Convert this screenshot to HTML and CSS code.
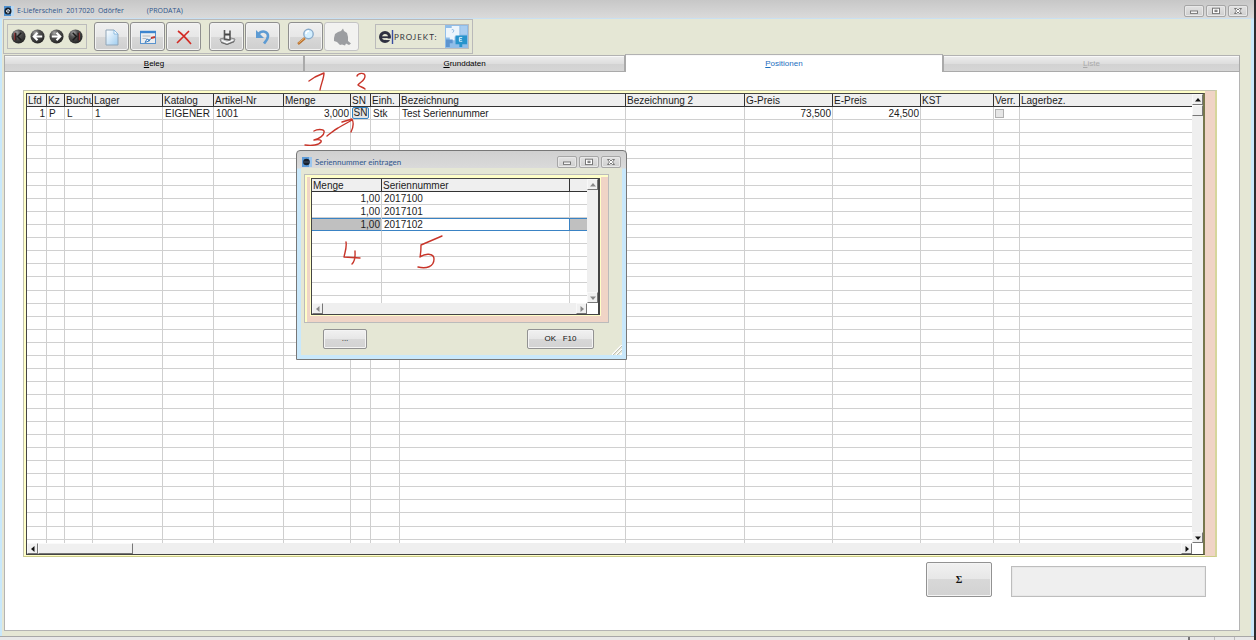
FILE: index.html
```html
<!DOCTYPE html>
<html lang="de">
<head>
<meta charset="utf-8">
<title>E-Lieferschein</title>
<link rel="stylesheet" href="styles.css">
</head>
<body>
<div class="window">
  <header class="titlebar">
    <svg class="appicon" viewBox="0 0 10 10"><rect width="10" height="10" fill="#4d8fcf"/><rect x="7" width="3" height="10" fill="#b9d8f2"/><circle cx="4" cy="5" r="3.5" fill="#18202c"/><path d="M2.5 5h3.2a1.6 1.6 0 1 0-.5 1.4" fill="none" stroke="#dfe8f2" stroke-width=".9"/></svg>
    <span class="caption">E-Lieferschein&nbsp; 2017020&nbsp; Odörfer</span><span class="tenant">(PRODATA)</span>
    <span class="winbtns">
      <button aria-label="Minimieren"><svg viewBox="0 0 10 8"><rect x="1.5" y="4" width="7" height="2.4"/></svg></button>
      <button aria-label="Maximieren"><svg viewBox="0 0 10 8"><rect x="1.5" y="1.2" width="7" height="5.4"/><rect x="4" y="3.2" width="2" height="1.4"/></svg></button>
      <button aria-label="Schließen"><svg viewBox="0 0 10 8"><path d="M1.5 1.5h2L5 3l1.500-1.500h2L6.500 4l2 2.500h-2L5 5 3.500 6.500h-2L3.500 4z"/></svg></button>
    </span>
  </header>
  <div class="client">
    <div class="toolbar">
      <div class="navgroup">
        <button aria-label="Erster"><svg viewBox="0 0 16 16"><use href="#ball"/><path d="M5 4v8M11 4 7 8l4 4" stroke="#1c1c1c" stroke-width="1.600" fill="none"/><path d="M4 4v8" stroke="#a03030"/></svg></button>
        <button aria-label="Zurück"><svg viewBox="0 0 16 16"><use href="#ball"/><path d="M8 4 4 8l4 4M4.500 8H13" stroke="#fff" stroke-width="2.200" fill="none"/></svg></button>
        <button aria-label="Weiter"><svg viewBox="0 0 16 16"><use href="#ball"/><path d="M8 4l4 4-4 4M11.500 8H3" stroke="#fff" stroke-width="2.200" fill="none"/></svg></button>
        <button aria-label="Letzter"><svg viewBox="0 0 16 16"><use href="#ball"/><path d="M5 4l4 4-4 4M11 4v8" stroke="#1c1c1c" stroke-width="1.600" fill="none"/><path d="M12 4v8" stroke="#a03030"/></svg></button>
      </div>
      <div class="tools">
        <button aria-label="Neu"><svg viewBox="0 0 18 18"><path d="M3 2h8l4 4v11H3z" fill="url(#paper)" stroke="#8fa5b8"/><path d="M11 2v4h4z" fill="#fff" stroke="#7fb3dc" stroke-width=".8"/></svg></button>
        <button aria-label="Bearbeiten"><svg viewBox="0 0 18 18"><rect x="1.500" y="3.500" width="15" height="12" fill="#eceef0" stroke="#5a93cd"/><path d="M1 4h16" stroke="#3d85cf" stroke-width="2.400"/><path d="M3.500 8h8M3.500 10.500h4" stroke="#b4bbc2"/><path d="M6 14.500l2-3.500 3 1.500zM9 13l4-3" fill="#fff" stroke="#3f7fc0"/><path d="M12 10l4-1" stroke="#c23b34" stroke-width="2"/></svg></button>
        <button aria-label="Löschen"><svg viewBox="0 0 18 18"><path d="M3 3c4 3 8 7 13 13M14 3C10 7 6 11 2 15" fill="none" stroke="#d32a24" stroke-width="1.600"/></svg></button>
      </div>
      <div class="tools">
        <button aria-label="Speichern"><svg viewBox="0 0 18 18"><path d="M2 11l4-1h7l4 1-1 3-7 2.500L3 14z" fill="#c4c6c8" stroke="#8a8a8a"/><path d="M6.500 2v9l5.500 1V2.500" fill="#eee" stroke="#555" stroke-width="1.600"/><path d="M7 6.500h5" stroke="#444" stroke-width="2"/><path d="M4 12.500l5 2 6-2.500" stroke="#fff" fill="none" stroke-width="1.200"/><path d="M3 14.500l6 2 7-3" stroke="#666" fill="none"/></svg></button>
        <button aria-label="Rückgängig"><svg viewBox="0 0 18 18"><path d="M4 6.500c4-5 10-3 10 1.500 0 3-2 5-4 7.500" fill="none" stroke="#5d9bd3" stroke-width="2.600"/><path d="M2 2v8h8z" fill="#5d9bd3"/></svg></button>
      </div>
      <div class="tools">
        <button aria-label="Suchen"><svg viewBox="0 0 18 18"><path d="M1 16l7-6" stroke="#b86f2c" stroke-width="2.400"/><path d="M1.500 15l6-5" stroke="#eab36f"/><circle cx="11.500" cy="6" r="4.700" fill="#d4efff" stroke="#8aaccb" stroke-width="1.400"/><path d="M9 6a3 3 0 0 1 3-3" stroke="#fff" stroke-width="1.500" fill="none"/></svg></button>
        <button aria-label="Drucken" disabled><svg viewBox="0 0 18 18"><path d="M5 4l3-1 2-2.500 1 2.500 3 2 1 4v4l3 2.500-2 1.500-3-1.500-1 2-3-1-2 .500-3-3-3-1V10l1-4z" fill="#9c9ea1"/></svg></button>
      </div>
      <div class="brand">
        <svg class="brandmark" viewBox="0 0 16 18"><circle cx="7" cy="9" r="4.500" fill="none" stroke="#2e3040" stroke-width="3"/><path d="M4 9.200h8" stroke="#2e3040" stroke-width="1.800"/><path d="M8 11.300h6" stroke="#e6e6d6" stroke-width="1.500"/><path d="M14.500 2v14" stroke="#3a4da0" stroke-width="1.400"/></svg>
        <span class="brandname">PROJEKT:</span>
        <svg class="brandart" viewBox="0 0 24 24"><rect width="24" height="24" fill="#8fbde8"/><path d="M1 3h6V1h8v11h-5v4H5v-3H1z" fill="#edf5fc"/><path d="M16 1h7v9h-7z" fill="#a9cdf0"/><path d="M1 15h7v4H5v4H1z" fill="#5c94cf"/><path d="M11 11h12v9h-5v3h-3v-3h-4z" fill="#2794cc"/><path d="M15 13v4h3M15 15h2.500M15 13h3" stroke="#d5eefa" fill="none"/><path d="M7 5c2-1 3 1 1 3" stroke="#82b1e0" fill="none"/></svg>
      </div>
    </div>
    <nav class="tabs">
      <button class="tab tab-a"><u>B</u>eleg</button>
      <button class="tab tab-b"><u>G</u>runddaten</button>
      <button class="tab tab-c active"><u>P</u>ositionen</button>
      <button class="tab tab-d" disabled><u>L</u>iste</button>
    </nav>
    <main class="panel">
      <section class="gridframe">
        <div class="gridbox">
          <div class="gridview">
            <table class="grid positions">
              <colgroup><col class="w20"><col class="w18"><col class="w28"><col class="w70"><col class="w51"><col class="w70"><col class="w67"><col class="w20"><col class="w29"><col class="w226"><col class="w119"><col class="w88"><col class="w88"><col class="w73"><col class="w26"><col></colgroup>
              <thead><tr><th>Lfd</th><th>Kz</th><th>Buchu</th><th>Lager</th><th>Katalog</th><th>Artikel-Nr</th><th>Menge</th><th>SN</th><th>Einh.</th><th>Bezeichnung</th><th>Bezeichnung 2</th><th>G-Preis</th><th>E-Preis</th><th>KST</th><th>Verr.</th><th>Lagerbez.</th></tr></thead>
              <tbody id="rows"><tr><td class="num">1</td><td>P</td><td>L</td><td>1</td><td>EIGENER</td><td>1001</td><td class="num">3,000</td><td class="sncell"><button class="sn">SN</button></td><td>Stk</td><td>Test Seriennummer</td><td></td><td class="num">73,500</td><td class="num">24,500</td><td></td><td class="chk"><input type="checkbox" aria-label="Verr."></td><td></td></tr></tbody>
            </table>
          </div>
          <div class="vscroll"><button class="sb" aria-label="Nach oben"><svg viewBox="0 0 8 8"><path d="M1 5.500h6L4 2z"/></svg></button><span class="thumb"></span><button class="sb end" aria-label="Nach unten"><svg viewBox="0 0 8 8"><path d="M1 2.500h6L4 6z"/></svg></button></div>
          <div class="hscroll"><button class="sb" aria-label="Nach links"><svg viewBox="0 0 8 8"><path d="M5.500 1v6L2 4z"/></svg></button><span class="thumb"></span><button class="sb end" aria-label="Nach rechts"><svg viewBox="0 0 8 8"><path d="M2.500 1v6L6 4z"/></svg></button></div>
          <div class="corner"></div>
        </div>
      </section>
      <footer class="totals"><button class="btn sum">Σ</button><input class="total" type="text" aria-label="Summe" readonly></footer>
    </main>
  </div>
  <div class="statusbar"><span class="seg first"></span><span class="seg"></span><span class="seg"></span></div>
</div>

<div class="dialog" role="dialog" aria-label="Seriennummer eintragen">
  <header class="titlebar">
    <svg class="appicon" viewBox="0 0 10 10"><rect width="10" height="10" fill="#5d9bd8"/><rect x="7" width="3" height="10" fill="#9cc6ee"/><circle cx="4.500" cy="5" r="3.300" fill="#18202c"/><path d="M2 5h5" stroke="#5c708a" stroke-width=".7"/></svg>
    <span class="caption">Seriennummer eintragen</span>
    <span class="winbtns">
      <button aria-label="Minimieren"><svg viewBox="0 0 10 8"><rect x="1.500" y="4" width="7" height="2.400"/></svg></button>
      <button aria-label="Maximieren"><svg viewBox="0 0 10 8"><rect x="1.500" y="1.200" width="7" height="5.400"/><rect x="4" y="3.200" width="2" height="1.400"/></svg></button>
      <button aria-label="Schließen"><svg viewBox="0 0 10 8"><path d="M1.500 1.500h2L5 3l1.500-1.500h2L6.500 4l2 2.500h-2L5 5 3.500 6.500h-2L3.500 4z"/></svg></button>
    </span>
  </header>
  <div class="dlgbody">
    <div class="dlgframe">
      <div class="gridbox">
        <div class="gridview">
          <table class="grid serials">
            <colgroup><col class="w70"><col><col class="w17"></colgroup>
            <thead><tr><th>Menge</th><th>Seriennummer</th><th></th></tr></thead>
            <tbody>
              <tr><td class="num">1,00</td><td>2017100</td><td></td></tr>
              <tr><td class="num">1,00</td><td>2017101</td><td></td></tr>
              <tr class="selected"><td class="num">1,00</td><td class="edit">2017102</td><td></td></tr>
              <tr><td></td><td></td><td></td></tr><tr><td></td><td></td><td></td></tr><tr><td></td><td></td><td></td></tr><tr><td></td><td></td><td></td></tr><tr><td></td><td></td><td></td></tr><tr><td></td><td></td><td></td></tr>
            </tbody>
          </table>
        </div>
        <div class="vscroll"><button class="sb" aria-label="Nach oben"><svg viewBox="0 0 8 8"><path d="M1 5.500h6L4 2z"/></svg></button><button class="sb end" aria-label="Nach unten"><svg viewBox="0 0 8 8"><path d="M1 2.500h6L4 6z"/></svg></button></div>
        <div class="hscroll"><button class="sb" aria-label="Nach links"><svg viewBox="0 0 8 8"><path d="M5.500 1v6L2 4z"/></svg></button><button class="sb end" aria-label="Nach rechts"><svg viewBox="0 0 8 8"><path d="M2.500 1v6L6 4z"/></svg></button></div>
        <div class="corner"></div>
      </div>
    </div>
    <div class="dlgactions"><button class="btn more">...</button><button class="btn ok">OK&nbsp;&nbsp; F10</button></div>
    <svg class="grip" viewBox="0 0 10 10"><path d="M0 10 10 0M4 10l6-6M8 10l2-2" stroke="#fff" stroke-width="1.500"/><path d="M1 10l9-9M5 10l5-5" stroke="#a9a9a0" stroke-width=".7"/></svg>
  </div>
</div>

<svg class="ink" width="460" height="290" aria-hidden="true">
  <defs>
    <radialGradient id="shade" cx=".35" cy=".25" r=".8"><stop offset="0" stop-color="#aaa"/><stop offset=".35" stop-color="#555"/><stop offset="1" stop-color="#222"/></radialGradient>
    <circle id="ball" cx="8" cy="8" r="7.500" fill="url(#shade)"/>
    <linearGradient id="paper" x2="1" y2="1"><stop offset="0" stop-color="#fff"/><stop offset="1" stop-color="#9fcdf0"/></linearGradient>
  </defs>
  <path d="M309 81l6-4 9-4c0 5-3 11-4 17M357 76c1-3 8-4 8 0 0 5-5 6-7 9 2 2 5 2 7 4M314 131c3-2 9-2 10 0 1 4-5 8-10 9 5-1 8 0 7 2-2 3-9 4-16 3M327 136c4-3 7-6 11-8 5-3 9-5 14-8M342 122l10-3c2 4 1 9-1 13M346 242c1 5-1 10-2 15l16 1M355 251c0 5 1 9-3 13M442 236l-21 9c0 4 0 8-1 12 5-4 14-4 14 2 0 8-8 10-16 8"/>
</svg>
<script src="grid.js"></script>
</body>
</html>
```
FILE: styles.css
```css
* { box-sizing: border-box; }
html, body { height: 100%; }
body { margin: 0; overflow: hidden; background: #2c2c30; font: 10px/12px "Liberation Sans", Arial, sans-serif; color: #1c1c1c; }
button, input { margin: 0; font: inherit; color: inherit; }
button { padding: 0; display: grid; place-items: center; }
svg { display: block; }

.window { height: 100%; margin-right: 2px; display: flex; flex-direction: column; background: #c9e8fb; }
.titlebar { display: flex; align-items: center; background: linear-gradient(#c7c7c7, #cdcdcd 30%, #dadada); color: #2f568c; font: 8px/10px Lato, "Open Sans", sans-serif; }
.window > .titlebar { height: 19px; padding: 4px 6px 0 4px; border-bottom: 1px solid #c9e0f2; font: 7px/10px "Open Sans", "Noto Sans", sans-serif; }
.appicon { width: 10px; height: 10px; margin-right: 3px; }
.tenant { margin-left: 23px; }
.winbtns { margin-left: auto; display: flex; gap: 2px; }
.winbtns button { width: 20px; height: 12px; border: 1px solid #a6a6a6; border-radius: 2px; background: linear-gradient(#e2e2e2, #cfcfcf); box-shadow: inset 0 0 0 1px #e8e8e8; }
.winbtns svg { width: 10px; height: 8px; fill: #fff; stroke: #777; stroke-width: 1; }

.client { flex: 1; min-height: 0; margin: 0 3px 0 2px; display: flex; flex-direction: column; background: #e5e7d5; padding: 0 11px 5px 2px; }
.toolbar { align-self: flex-start; display: flex; align-items: center; gap: 8px; height: 35px; margin-left: -1px; padding: 0 3px; border: 1px solid #b9b9b9; }
.navgroup { display: flex; gap: 4px; align-items: center; height: 25px; padding: 0 3px; border: 1px solid #bbb; margin-right: -1px; }
.navgroup button { width: 15px; height: 15px; border: 0; background: none; }
.navgroup svg { width: 15px; height: 15px; }
.tools { display: flex; gap: 1px; }
.tools button { width: 35px; height: 29px; border: 1px solid #8f8f8f; border-radius: 3px; background: linear-gradient(#f0f0f0, #e7e7e7 50%, #d8d8d8 51%, #cfcfcf); box-shadow: inset 0 0 0 1px #f3f3f3; }
.tools button:disabled { background: #f2f2f0; border-color: #c4c4c4; }
.tools svg { width: 18px; height: 18px; }
.brand { display: flex; align-items: center; height: 25px; margin-left: 8px; padding-left: 2px; border: 1px solid #bbb; }
.brandmark { width: 16px; height: 18px; }
.brandname { width: 51px; font: 8px/12px Lato, sans-serif; letter-spacing: 1px; color: #33343c; white-space: nowrap; }
.brandart { width: 23px; height: 23px; }

.tabs { display: flex; align-items: flex-end; height: 18px; }
.tab { height: 17px; padding-top: 1px; font-size: 8px; line-height: 10px; border: 1px solid #aaa; border-top-color: #b2b2b2; background: linear-gradient(#ededed, #dedede 50%, #d2d2d2 51%, #d6d6d6); box-shadow: inset 0 1px 0 #f8f8f8; display: block; color: #000; }
.tab-a { flex: 300; } .tab-b { flex: 321; } .tab-c { flex: 318; } .tab-d { flex: 297; }
.tab.active { height: 18px; padding: 0; border-bottom: 0; background: #fff; color: #1c6fc0; }
.tab:disabled { color: #aaa; }
.panel { flex: 1; min-height: 0; display: flex; flex-direction: column; background: #fff; border: 1px solid #b4b4b4; border-top: 0; padding: 18px 22px 33px 18px; }

.gridframe { flex: 1; min-height: 0; padding: 2px 10px 1px 2px; border: 1px solid #c4c4b0; border-right: 2px solid #d6d69c; border-bottom-color: #cccc88; background: linear-gradient(#f0d4c6, #f0d4c6) right / 10px 100% no-repeat, #ffffc8; display: grid; }
.gridbox { display: grid; grid-template: minmax(0, 1fr) 11px / minmax(0, 1fr) 11px; border: 1px solid #444; background: #fff; min-height: 0; }
.gridframe .gridbox { border-right: 2px solid #77774c; }
.gridview { overflow: hidden; background: #fff; }
.grid { width: 100%; table-layout: fixed; border-collapse: separate; border-spacing: 0; }
.positions { height: 459px; }
.grid th, .grid td { padding: 2px 2px 0; height: 13px; line-height: 10px; overflow: hidden; white-space: nowrap; text-align: left; font-weight: normal; border-right: 1px solid #cfcfcf; border-bottom: 1px solid #d0d0d0; }
.grid th { padding: 2px 0 0 1px; background: #efefef; border-right-color: #333; border-bottom-color: #333; }
.grid td.num { text-align: right; padding-right: 1px; }
.grid th:last-child, .grid td:last-child { border-right: 0; }
.grid td.sncell, .grid td.chk { padding: 0 1px; }
.sn { width: 17px; height: 12px; line-height: 10px; border: 1px solid #3484c4; border-radius: 2px; background: #e3e3e3; display: block; }
.chk input { appearance: none; display: block; width: 9px; height: 9px; border: 1px solid #b0b0b0; background: #e6e6e6; }
.w17 { width: 17px; } .w18 { width: 18px; } .w20 { width: 20px; } .w26 { width: 26px; } .w28 { width: 28px; } .w29 { width: 29px; } .w51 { width: 51px; } .w67 { width: 67px; } .w70 { width: 70px; } .w73 { width: 73px; } .w88 { width: 88px; } .w119 { width: 119px; } .w226 { width: 226px; }
.vscroll, .hscroll { display: flex; background: #efefef; }
.vscroll { flex-direction: column; }
.sb { width: 11px; height: 11px; flex: none; border: 1px solid; border-color: #f8f8f8 #777 #777 #f8f8f8; background: #f0f0f0; }
.sb svg { width: 8px; height: 8px; fill: #111; }
.sb.end { margin-top: auto; }
.hscroll .sb.end { margin: 0 0 0 auto; }
.thumb { flex: none; border: 1px solid; border-color: #fafafa #777 #777 #fafafa; background: #f0f0f0; }
.vscroll .thumb { height: 11px; }
.hscroll .thumb { width: 95px; }

.totals { display: flex; justify-content: flex-end; align-items: flex-end; gap: 19px; padding: 5px 11px 0 0; }
.btn { border: 1px solid #929292; border-radius: 2px; background: linear-gradient(#f1f1f1, #e7e7e7 48%, #d8d8d8 50%, #d2d2d2); box-shadow: inset 0 0 0 1px #f4f4f4; font-size: 8px; line-height: 10px; color: #111; }
.sum { width: 66px; height: 35px; font-size: 10px; font-family: "Liberation Serif", serif; font-weight: bold; }
.total { width: 195px; height: 31px; border: 1px solid #bdbdbd; background: #efefef; box-shadow: inset 0 0 0 1px #e8e8e8; }
.statusbar { height: 4px; display: flex; justify-content: flex-end; background: #e8e8e8; border-top: 1px solid #a8a8a8; }
.seg { width: 20px; border-left: 1px solid #bbb; }
.seg.first { width: 26px; border-left: 2px solid #777; }

.dialog { position: absolute; left: 296px; top: 150px; width: 331px; display: flex; flex-direction: column; padding: 0 4px 4px; border: 1px solid #777; border-radius: 4px 4px 0 0; background: linear-gradient(#d0d0d0, #dadada 17px, #c9e8fb 18px); }
.dialog .titlebar { height: 17px; padding: 5px 1px 0; background: none; }
.dlgbody { position: relative; padding: 6px 13px 6px 3px; background: #e5e7d5; }
.dlgframe { border: 1px solid #bbb; padding: 3px 8px 7px 6px; background: #f0d4c6; box-shadow: inset 1px 1px 0 1px #ffffc8; }
.dlgframe .gridbox { height: 137px; outline: 1px solid #ffffc8; border-right-width: 2px; }
.dlgframe .sb svg { fill: #888; }
.selected td { background: #c0c0c0; border-bottom-color: #3a83c4; box-shadow: inset 0 1px 0 #3a83c4; }
.grid .selected .edit { background: #fff; border-right-color: #3a83c4; }
.dlgactions { display: flex; justify-content: space-between; padding: 6px 15px 0 19px; }
.more { width: 44px; height: 20px; }
.ok { width: 67px; height: 20px; }
.grip { position: absolute; right: 0; bottom: 0; width: 10px; height: 10px; }
.ink { position: absolute; left: 0; top: 0; pointer-events: none; fill: none; stroke: #c8352a; stroke-width: 1.4; stroke-linecap: round; stroke-linejoin: round; }
```
FILE: grid.js
```js
const body = document.getElementById("rows");
const columns = body.rows[0].cells.length;
for (let r = 0; r < 33; r++) {
  const row = body.insertRow();
  for (let c = 0; c < columns; c++) row.insertCell();
}
```
